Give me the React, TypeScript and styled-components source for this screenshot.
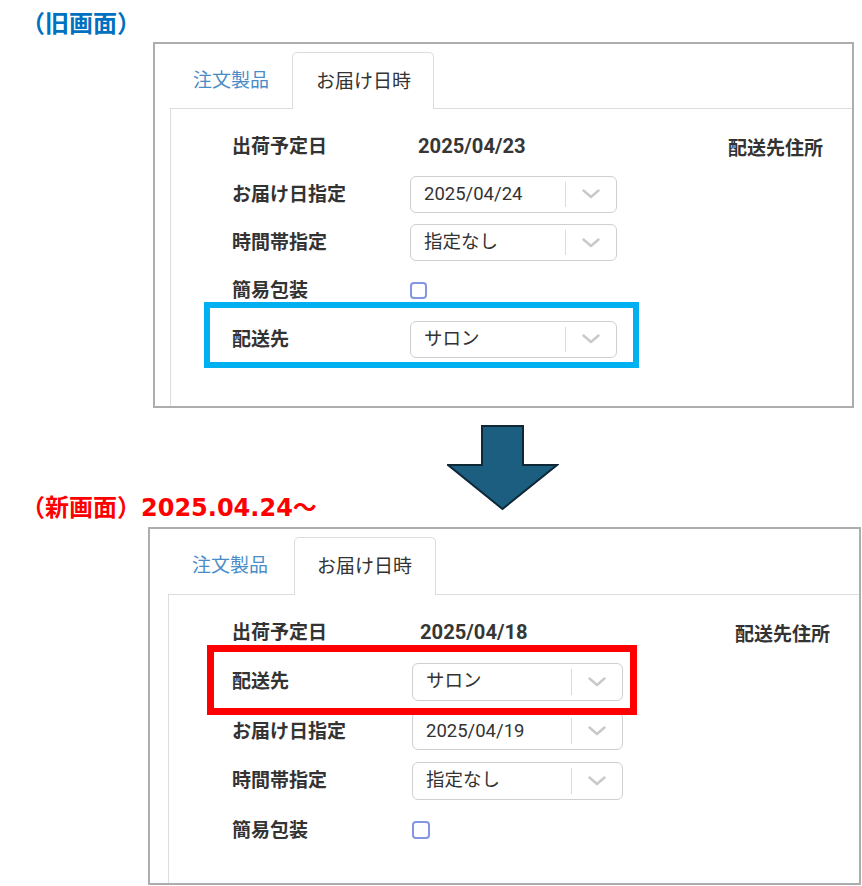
import React from "react";
import styled, { createGlobalStyle, css } from "styled-components";

const GlobalStyle = createGlobalStyle`
  html, body { margin: 0; padding: 0; background: #ffffff; }
  body { font-family: Roboto, "Noto Sans CJK JP", sans-serif; color: #333333; }
`;

type Metrics = {
  left: number;
  width: number;
  height: number;
  top: number;
  inset: number;
  tabPadL: number;
  tabPadR: number;
  activePadL: number;
  activePadR: number;
  tabH: number;
  padTop: number;
  padLeft: number;
  rowH: number;
  labelW: number;
  selectW: number;
  selectH: number;
  addressGap: number;
  check: number;
};

type Field =
  | { kind: "text"; label: string; value: string }
  | { kind: "select"; label: string; value: string }
  | { kind: "check"; label: string };

type Mark = { color: string; width: number; top: number; right: number; bottom: number; left: number };

const Page = styled.div`
  width: 862px;
  height: 886px;
  overflow: hidden;
  padding-top: 10px;
  box-sizing: border-box;
`;

const Heading = styled.h2<{ $color: string }>`
  margin: 0 0 0 21px;
  font-family: "DejaVu Sans", "Noto Sans CJK JP", sans-serif;
  font-weight: 700;
  font-size: 24px;
  line-height: 28px;
  color: ${(p) => p.$color};
  white-space: nowrap;
`;

const Transition = styled.div`
  display: grid;
  grid-template-columns: 447px 112px;
  height: 98px;
  margin-top: 16px;
`;

const BottomHeading = styled(Heading)`
  align-self: end;
`;

const ArrowSvg = styled.svg`
  display: block;
  align-self: start;
`;

const Frame = styled.section<{ $m: Metrics }>`
  margin: ${(p) => p.$m.top}px 0 0 ${(p) => p.$m.left}px;
  width: ${(p) => p.$m.width}px;
  height: ${(p) => p.$m.height}px;
  box-sizing: border-box;
  border: 2px solid #adadad;
  background: #ffffff;
  overflow: hidden;
  display: flex;
  flex-direction: column;
  padding-top: 8px;
`;

const TabBar = styled.div<{ $m: Metrics }>`
  display: flex;
  align-items: flex-end;
  height: ${(p) => p.$m.tabH}px;
  padding-left: ${(p) => p.$m.inset}px;
  flex-shrink: 0;
`;

const Tab = styled.div<{ $m: Metrics; $active?: boolean }>`
  box-sizing: border-box;
  display: flex;
  align-items: center;
  height: ${(p) => p.$m.tabH}px;
  padding: 0 ${(p) => p.$m.tabPadR}px 0 ${(p) => p.$m.tabPadL}px;
  font-size: 19px;
  line-height: 1;
  color: #4a8cc8;
  white-space: nowrap;
  ${(p) =>
    p.$active &&
    css`
      height: ${p.$m.tabH + 1}px;
      margin-bottom: -1px;
      padding: 0 ${p.$m.activePadR}px 0 ${p.$m.activePadL}px;
      color: #333333;
      background: #ffffff;
      border: 1px solid #dcdcdc;
      border-bottom: none;
      border-radius: 5px 5px 0 0;
      position: relative;
      z-index: 1;
    `}
`;

const Panel = styled.div<{ $m: Metrics }>`
  flex: 1;
  margin-left: ${(p) => p.$m.inset}px;
  border-top: 1px solid #dddddd;
  border-left: 1px solid #dddddd;
  display: flex;
  align-items: flex-start;
  padding: ${(p) => p.$m.padTop}px 0 0 ${(p) => p.$m.padLeft}px;
`;

const Form = styled.div`
  display: flex;
  flex-direction: column;
`;

const Row = styled.div<{ $m: Metrics }>`
  position: relative;
  display: grid;
  grid-template-columns: ${(p) => p.$m.labelW}px ${(p) => p.$m.selectW}px;
  height: ${(p) => p.$m.rowH}px;
  align-items: center;
`;

const Label = styled.div`
  font-size: 19px;
  font-weight: 700;
  line-height: 1;
  color: #333333;
  white-space: nowrap;
`;

const Value = styled.div`
  padding-left: 8px;
  font-size: 20.2px;
  font-weight: 700;
  line-height: 1;
  color: #363636;
`;

const AddressHeading = styled.div<{ $m: Metrics }>`
  margin-left: ${(p) => p.$m.addressGap}px;
  height: ${(p) => p.$m.rowH}px;
  display: flex;
  align-items: center;
  font-size: 19px;
  font-weight: 700;
  color: #333333;
  white-space: nowrap;
`;

const SelectBox = styled.div<{ $m: Metrics }>`
  box-sizing: border-box;
  width: ${(p) => p.$m.selectW}px;
  height: ${(p) => p.$m.selectH}px;
  border: 1px solid #cfcfcf;
  border-radius: 6px;
  background: #ffffff;
  display: flex;
  align-items: center;
`;

const SelectText = styled.div`
  flex: 1;
  padding-left: 13px;
  font-size: 18.5px;
  line-height: 1;
  color: #333333;
  white-space: nowrap;
`;

const SelectDivider = styled.div`
  width: 1px;
  align-self: stretch;
  margin: 5px 0;
  background: #dadada;
`;

const SelectCaret = styled.div`
  width: 50px;
  display: flex;
  justify-content: center;
  align-items: center;
`;

const CheckBox = styled.div<{ $m: Metrics }>`
  box-sizing: border-box;
  width: ${(p) => p.$m.check}px;
  height: ${(p) => p.$m.check}px;
  border: 2px solid #8396e4;
  border-radius: 4px;
  background: #ffffff;
`;

const Highlight = styled.div<{ $mark: Mark }>`
  position: absolute;
  top: ${(p) => p.$mark.top}px;
  right: ${(p) => p.$mark.right}px;
  bottom: ${(p) => p.$mark.bottom}px;
  left: ${(p) => p.$mark.left}px;
  border: ${(p) => p.$mark.width}px solid ${(p) => p.$mark.color};
  pointer-events: none;
  z-index: 2;
`;

const Chevron = () => (
  <svg width="18" height="10" viewBox="0 0 18 10" aria-hidden="true">
    <path d="M1.5 1.5 L9 8 L16.5 1.5" fill="none" stroke="#c9c9c9" strokeWidth="2.4" strokeLinecap="round" strokeLinejoin="round" />
  </svg>
);

const Select = ({ m, value }: { m: Metrics; value: string }) => (
  <SelectBox $m={m}>
    <SelectText>{value}</SelectText>
    <SelectDivider />
    <SelectCaret>
      <Chevron />
    </SelectCaret>
  </SelectBox>
);

const DeliveryPanel = ({ m, fields, mark, markIndex }: { m: Metrics; fields: Field[]; mark: Mark; markIndex: number }) => (
  <Frame $m={m}>
    <TabBar $m={m}>
      <Tab $m={m}>注文製品</Tab>
      <Tab $m={m} $active>
        お届け日時
      </Tab>
    </TabBar>
    <Panel $m={m}>
      <Form>
        {fields.map((f, i) => (
          <Row $m={m} key={f.label}>
            <Label>{f.label}</Label>
            {f.kind === "text" && <Value>{f.value}</Value>}
            {f.kind === "select" && <Select m={m} value={f.value} />}
            {f.kind === "check" && <CheckBox $m={m} />}
            {i === markIndex && <Highlight $mark={mark} />}
          </Row>
        ))}
      </Form>
      <AddressHeading $m={m}>配送先住所</AddressHeading>
    </Panel>
  </Frame>
);

const oldMetrics: Metrics = {
  left: 153,
  width: 701,
  height: 366,
  top: 4,
  inset: 15,
  tabPadL: 23,
  tabPadR: 23,
  activePadL: 23,
  activePadR: 22,
  tabH: 56,
  padTop: 13,
  padLeft: 61,
  rowH: 48.25,
  labelW: 178,
  selectW: 207,
  selectH: 37,
  addressGap: 111,
  check: 17,
};

const newMetrics: Metrics = {
  left: 148,
  width: 713,
  height: 358,
  top: 5,
  inset: 18,
  tabPadL: 24,
  tabPadR: 26,
  activePadL: 22,
  activePadR: 23,
  tabH: 57,
  padTop: 12.25,
  padLeft: 63,
  rowH: 49.5,
  labelW: 180,
  selectW: 211,
  selectH: 38,
  addressGap: 112,
  check: 18,
};

const oldFields: Field[] = [
  { kind: "text", label: "出荷予定日", value: "2025/04/23" },
  { kind: "select", label: "お届け日指定", value: "2025/04/24" },
  { kind: "select", label: "時間帯指定", value: "指定なし" },
  { kind: "check", label: "簡易包装" },
  { kind: "select", label: "配送先", value: "サロン" },
];

const newFields: Field[] = [
  { kind: "text", label: "出荷予定日", value: "2025/04/18" },
  { kind: "select", label: "配送先", value: "サロン" },
  { kind: "select", label: "お届け日指定", value: "2025/04/19" },
  { kind: "select", label: "時間帯指定", value: "指定なし" },
  { kind: "check", label: "簡易包装" },
];

const blueMark: Mark = { color: "#00b0f0", width: 6, top: -13, right: -22, bottom: -5, left: -28 };
const redMark: Mark = { color: "#ff0000", width: 7, top: -12, right: -14, bottom: -9, left: -25 };

const DownArrow = () => (
  <ArrowSvg width="112" height="88" viewBox="0 0 112 88" aria-hidden="true">
    <path d="M35 2 H76 V41 H110 L55.5 85 L1 41 H35 Z" fill="#1c5e7f" stroke="#0e2838" strokeWidth="2" strokeLinejoin="miter" />
  </ArrowSvg>
);

export default function App() {
  return (
    <>
      <GlobalStyle />
      <Page>
        <Heading $color="#0070c0">（旧画面）</Heading>
        <DeliveryPanel m={oldMetrics} fields={oldFields} mark={blueMark} markIndex={4} />
        <Transition>
          <BottomHeading $color="#ff0000">（新画面）2025.04.24～</BottomHeading>
          <DownArrow />
        </Transition>
        <DeliveryPanel m={newMetrics} fields={newFields} mark={redMark} markIndex={1} />
      </Page>
    </>
  );
}
